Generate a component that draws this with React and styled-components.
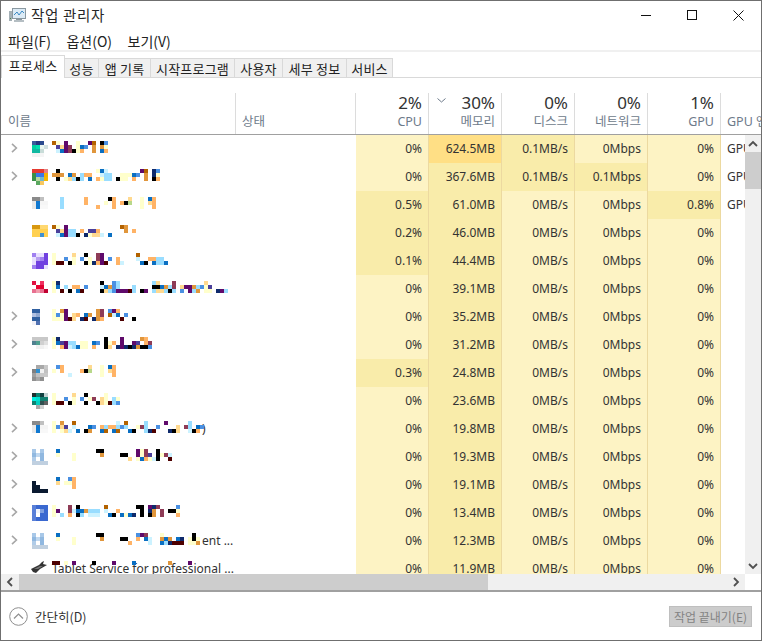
import React from "react";
import styled, { createGlobalStyle } from "styled-components";

const GlobalStyle = createGlobalStyle`
  html, body {
    margin: 0;
    padding: 0;
    background: #fff;
  }
  body {
    font-family: "Noto Sans", "Noto Sans CJK KR", sans-serif;
    font-size: 12px;
    color: #1f1f1f;
  }
`;

const COLUMNS = "235px 120px 73px 73px 73px 73px 73px 73px";
const heatColors = ["#fdf3c4", "#f9ecaa", "#ffdf85"];

const Window = styled.div`
  width: 762px;
  height: 641px;
  box-sizing: border-box;
  border: 1px solid #6f6f6f;
  display: flex;
  flex-direction: column;
  overflow: hidden;
  background: #fff;
`;

const TitleBar = styled.div`
  height: 30px;
  box-sizing: border-box;
  padding: 0 0 2px 8px;
  flex: none;
  display: flex;
  align-items: center;
  gap: 5px;
  font-size: 14.5px;
  color: #262626;
`;

const TitleText = styled.span`
  flex: 1;
  font-family: "Noto Sans CJK KR", sans-serif;
  letter-spacing: 0.7px;
  margin-bottom: 2px;
`;

const WindowButton = styled.div`
  width: 46px;
  height: 28px;
  display: flex;
  align-items: center;
  justify-content: center;
`;

const WindowButtons = styled.div`
  display: flex;
`;

const MenuBar = styled.div`
  height: 21px;
  box-sizing: border-box;
  flex: none;
  display: flex;
  align-items: center;
  gap: 15.5px;
  padding-left: 7px;
  font-family: "Noto Sans CJK KR", sans-serif;
  font-size: 14px;
  color: #222;
  border-bottom: 2px solid #f0f0f0;
`;

const TabStrip = styled.div`
  height: 26px;
  flex: none;
  display: flex;
  align-items: flex-end;
  border-bottom: 1px solid #d9d9d9;
  box-sizing: border-box;
`;

const Tab = styled.div`
  width: ${(p) => p.$width}px;
  height: ${(p) => (p.$active ? 23 : 19)}px;
  box-sizing: border-box;
  display: flex;
  align-items: center;
  justify-content: center;
  font-family: "Noto Sans CJK KR", sans-serif;
  font-size: 13px;
  letter-spacing: 0.2px;
  color: #222;
  background: ${(p) => (p.$active ? "#fff" : "#f0f0f0")};
  border: 1px solid #d9d9d9;
  border-left-width: ${(p) => (p.$active ? 1 : 0)}px;
  border-bottom-width: 0;
  padding-bottom: ${(p) => (p.$active ? 4 : 0)}px;
  margin-bottom: ${(p) => (p.$active ? -1 : 0)}px;
  position: relative;
  white-space: nowrap;
`;

const Header = styled.div`
  height: 57px;
  flex: none;
  padding-top: 15px;
  box-sizing: border-box;
  display: grid;
  grid-template-columns: ${COLUMNS};
  border-bottom: 1px solid #a0a0a0;
  overflow: hidden;
`;

const HeaderCell = styled.div`
  position: relative;
  display: flex;
  flex-direction: column;
  justify-content: flex-end;
  align-items: ${(p) => (p.$left ? "flex-start" : "flex-end")};
  padding: 0 6px 4px ${(p) => p.$pad || 6}px;
  border-right: 1px solid #dcdcdc;
  white-space: nowrap;
  min-width: 0;
`;

const HeaderValue = styled.div`
  font-size: 17px;
  line-height: 19px;
  margin-bottom: 1px;
  color: #333;
`;

const HeaderLabel = styled.div`
  font-family: "Noto Sans", "Noto Sans CJK KR", sans-serif;
  font-size: 12.5px;
  line-height: 17px;
  color: #6d7a8a;
`;

const SortMark = styled.svg`
  position: absolute;
  left: 8px;
  top: 5px;
`;

const Main = styled.div`
  flex: 1;
  min-height: 0;
  display: flex;
`;

const Rows = styled.div`
  flex: 1;
  min-width: 0;
  overflow: hidden;
`;

const Row = styled.div`
  height: 28px;
  display: grid;
  grid-template-columns: ${COLUMNS};
`;

const NameCell = styled.div`
  position: relative;
  white-space: nowrap;
  overflow: hidden;
  line-height: 28px;
  padding-left: ${(p) => p.$indent}px;
  color: #333;
`;

const Chevron = styled.svg`
  position: absolute;
  left: 10px;
  top: 8px;
`;

const Mosaic = styled.svg`
  position: absolute;
  left: 30px;
  top: 6px;
`;

const DataCell = styled.div`
  background: ${(p) => heatColors[p.$heat]};
  border-right: 1px solid #ecd9a0;
  text-align: right;
  padding-right: 6px;
  line-height: 27px;
  color: #333;
  white-space: nowrap;
`;

const EngineCell = styled.div`
  padding-left: 6px;
  line-height: 27px;
  color: #333;
  white-space: nowrap;
  overflow: hidden;
`;

const VScroll = styled.div`
  width: 16px;
  flex: none;
  background: #f0f0f0;
  display: flex;
  flex-direction: column;
  align-items: center;
`;

const ScrollButton = styled.div`
  width: ${(p) => (p.$horizontal ? "18px" : "100%")};
  height: ${(p) => (p.$horizontal ? "100%" : "17px")};
  flex: none;
  display: flex;
  align-items: center;
  justify-content: center;
`;

const VThumb = styled.div`
  width: 100%;
  height: 37px;
  background: #cdcdcd;
`;

const Spacer = styled.div`
  flex: 1;
`;

const HScrollRow = styled.div`
  height: 16px;
  flex: none;
  display: flex;
`;

const HScroll = styled.div`
  flex: 1;
  background: #f0f0f0;
  display: flex;
`;

const HThumb = styled.div`
  width: 469px;
  background: #cdcdcd;
`;

const Corner = styled.div`
  width: 16px;
  flex: none;
  background: #fff;
`;

const Footer = styled.div`
  height: 50px;
  flex: none;
  box-sizing: border-box;
  border-top: 2px solid #a0a0a0;
  display: flex;
  align-items: center;
  padding: 0 9px 0 8px;
  gap: 7px;
`;

const FooterLabel = styled.span`
  flex: 1;
  font-family: "Noto Sans CJK KR", sans-serif;
  font-size: 12.5px;
  color: #333;
`;

const EndButton = styled.div`
  width: 83px;
  height: 21px;
  box-sizing: border-box;
  background: #cccccc;
  border: 1px solid #bfbfbf;
  display: flex;
  align-items: center;
  justify-content: center;
  font-family: "Noto Sans CJK KR", sans-serif;
  font-size: 12px;
  color: #838383;
  white-space: nowrap;
`;

const palette = {
  k: "#000000",
  o: "#ffb366",
  O: "#e0963c",
  b: "#0a6fc2",
  B: "#4a90e2",
  l: "#99ddff",
  t: "#ccf2ff",
  y: "#ffffcc",
  c: "#ffd98f",
  p: "#5f0a6b",
  m: "#8e3b56",
  n: "#0f2a6b",
  i: "#4a3f9a",
  r: "#b36200",
  d: "#4d0000",
  g: "#b8d88a",
};

const T = ["#8a8a8a #8a8a8a #c0c0c0 .", "#e8e8e8 #1078d0 #f5f5f5 #f5f5f5", "#e8e8e8 #1078d0 #f8f8f8 #f8f8f8"];
const W = [
  "#a8c8e8 . #a8c8e8 .",
  "#90b8e0 #c0d8f0 #90b8e0 .",
  "#b0cce8 . #90b8e0 .",
  "#c0d0e0 #c0d0e0 #c0d0e0 #c0d0e0",
];

const processes = [
  {
    chevron: true,
    icon: ["#3a5a9a #25357f #2a4a8f .", "#00d0a0 #00e0b0 #e8f5f0 #d0e0e0", "#10b8a0 #10b8a0 #c8dcd8 .", "#f2f2f2 #f2f2f2 #f5f5f5 ."],
    text: ["0r 1y 3p 6y 9p 10r 12k 13B", "1i 2c 3p 4m 6y 7b 8B 10O 12O 13y", "1t 2b 3p 4m 5k 6y 7o 10O 12b 13o"],
    cpu: "0%", mem: "624.5MB", disk: "0.1MB/s", net: "0Mbps", gpu: "0%", engine: "GPU",
    memHeat: 2, diskHeat: 1,
  },
  {
    chevron: true,
    icon: ["#e53a30 #e53a30 #e53a30 #e88080", "#3a9048 #3a78e8 #3a78e8 #f5b000", "#3a9048 #b8d8a0 #70b8d0 #f5b800", ". #5aa860 #f8c860 ."],
    text: [
      "1k 11y 12b 13t 22p 23r 25n 26B",
      "0O 1O 2O 4b 5O 7l 8o 9o 12t 13l 14l 17y 18y 19y 20b 21B 23O 25n 26y",
      "1k 3y 4c 5l 6k 7l 9b 11o 12y 13l 14l 16k 17y 18y 20o 23O 25k 26o",
    ],
    cpu: "0%", mem: "367.6MB", disk: "0.1MB/s", net: "0.1Mbps", gpu: "0%", engine: "GPU",
    diskHeat: 1, netHeat: 1,
  },
  {
    icon: T,
    text: ["2l 8o 14k 15o 19c 22y 24b 25o", "2l 8o 13y 15o 17o 18k 19g 22y 24c 25o", "2l 11o 15o 22y 25o"],
    cpu: "0.5%", mem: "61.0MB", disk: "0MB/s", net: "0Mbps", gpu: "0.8%", engine: "GPU",
    cpuHeat: 1, gpuHeat: 1,
  },
  {
    icon: ["#d89810 #d89810 #ffd870 #ffd870", "#ffd050 #ffd050 #ffd050 #ffd050", "#ffd050 #ffd050 #4090d0 #ffd050"],
    text: ["0r 1y 3p 17r 18O", "1i 2c 3p 4l 5l 7o 9i 10i 11o 18O 20o", "1t 2b 3p 4l 5l 6k 8n 9y 10c 11c 12t 14b"],
    cpu: "0.2%", mem: "46.0MB", disk: "0MB/s", net: "0Mbps", gpu: "0%",
    cpuHeat: 1,
  },
  {
    icon: ["#a080f0 #e8e0ff #e8e0ff #7040e0", "#e8e0ff #b8a0f0 #a080f0 #7040e0", "#e8e0ff #7040e0 #7040e0 #7040e0", "#a080f0 #7040e0 #7040e0 #e8e0ff"],
    text: [
      "0y 5c 8k 11m 12p 21r",
      "0y 3B 5y 7B 9y 11m 12p 14B 16o 21t 24o 25o 26l 27l",
      "0y 1d 2d 4k 5y 8k 9y 10n 11o 12p 13d 16o 17t 22b 23k 25b 26l 27l 28b",
    ],
    cpu: "0.1%", mem: "44.4MB", disk: "0MB/s", net: "0Mbps", gpu: "0%",
    cpuHeat: 1,
  },
  {
    icon: ["#e01040 . #f03060 .", ". #e80030 #e00030 .", "#e87090 #f0a0b0 #e87090 #c00030"],
    text: [
      "0y 1n 12k 15B 16l 25l 26c 30m 38c",
      "0y 1b 3l 5o 6o 8B 12t 13b 14O 15B 16l 20l 25k 26k 27b 28O 29l 30m 32c 33p 34p 35O 36l 37B 38y 39i",
      "0y 2d 4k 6b 7d 12k 13c 14l 15B 16p 17p 18p 19d 20l 22k 23p 25l 26c 27c 28l 29k 30l 32B 34p 35l 36O 38y 39y 41n 42p 43l",
    ],
    cpu: "0%", mem: "39.1MB", disk: "0MB/s", net: "0Mbps", gpu: "0%",
  },
  {
    chevron: true,
    icon: ["#3060a0 #3060a0 . .", "#b0c0e0 #90a8d0 . .", "#3060a0 #3060a0 . .", "#f0f0f8 #5070b0 . ."],
    text: [
      "0y 2O 3p 11O 12m 14B 15p 16o",
      "0y 1B 2y 3p 5c 6o 8b 9O 11O 12m 14r 15t 16b 18B",
      "0y 1y 2y 3p 4d 5c 7n 8d 10n 11O 12o 17d 20k",
    ],
    cpu: "0%", mem: "35.2MB", disk: "0MB/s", net: "0Mbps", gpu: "0%",
  },
  {
    chevron: true,
    icon: ["#c8c8c8 #c8c8c8 #c8c8c8 #c8c8c8", "#508090 #50a090 #d0d0d0 #e0e0e0", ". #f0f0f0 #f0f0f0 #f8f8f8"],
    text: [
      "0y 1n 13k 17p 22O 23o",
      "0y 1b 2i 3p 4l 5l 7y 8y 10b 11B 13k 14y 15o 17p 20p 21i 23o 24m",
      "0y 2o 3p 4t 5l 6b 7y 8y 10o 13k 14c 16n 17p 18n 19k 20n 21O 22k 23k 24B",
    ],
    cpu: "0%", mem: "31.2MB", disk: "0MB/s", net: "0Mbps", gpu: "0%",
  },
  {
    chevron: true,
    icon: [". #a8a8a8 #a8a8a8 #c8c8c8", "#808080 #3090d0 #f0f0f0 #c0c0c0", "#a0a0a0 #c0c0c0 #c8c8c8 #c8c8c8", "#909090 #a8a8a8 #909090 ."],
    text: ["1B 2o 9c 12y 14b 15o", "0y 2o 7o 8k 9g 12y 14c 15o", "4t 12y 15o"],
    cpu: "0.3%", mem: "24.8MB", disk: "0MB/s", net: "0Mbps", gpu: "0%",
    cpuHeat: 1,
  },
  {
    icon: ["#203030 #108070 #104040 #c0d0d0", "#00f0e0 #00e0d0 #108070 #108070", "#108070 #00d0c0 #305050 #606060", ". #a8a8a8 #d0d0d0 ."],
    text: ["0y 5c 8k 13y", "0y 3B 5y 7B 9y 10m 12c 13y 15l 16y", "0y 1d 2d 4k 5y 8k 11k 12c 13y 14d 15l 16B"],
    cpu: "0%", mem: "23.6MB", disk: "0MB/s", net: "0Mbps", gpu: "0%",
  },
  {
    chevron: true,
    icon: T,
    text: [
      "0y 2O 5r 16t 18r 23l 28p 34l",
      "0y 1B 2c 3i 5t 9b 10B 12o 13l 14o 15o 16l 17B 18l 21y 22m 23l 26B 31c 33m 34l 36b 37B",
      "0y 2y 3c 4t 6b 8k 9O 12b 13r 15b 16r 19b 20k 23l 24n 25d 29n 30k 31c 34t 35k 36o",
    ],
    tail: ")", tailAt: 201,
    cpu: "0%", mem: "19.8MB", disk: "0MB/s", net: "0Mbps", gpu: "0%",
  },
  {
    chevron: true,
    icon: W,
    text: [
      "1b 11k 12k 21p 22y 23m 26k",
      "1y 5y 12O 17k 18k 21p 22y 23m 24i 26k 27y 28m 29t",
      "5y 19c 21y 22b 23o 24y 25t 26k 29d",
    ],
    cpu: "0%", mem: "19.3MB", disk: "0MB/s", net: "0Mbps", gpu: "0%",
  },
  {
    chevron: true,
    icon: [". . . .", "#0a1a30 . . .", "#0a1a30 #0a1a30 . .", "#0a1a30 #0a1a30 #0a1a30 #0a1a30"],
    text: ["1b 4B 5o", "1c 3y 4y 5o", "5o"],
    cpu: "0%", mem: "19.1MB", disk: "0MB/s", net: "0Mbps", gpu: "0%",
  },
  {
    chevron: true,
    icon: ["#5a80d8 #3a68d0 #3a68d0 #3a68d0", "#5a80d8 #f0f4fc #80a0e0 #3a68d0", "#5a80d8 #ffffff #3a68d0 #3a68d0", "#5a80d8 #3a68d0 #3a68d0 #3a68d0"],
    text: [
      "0y 4m 6k 13r 21k 22k 24p 25n 26m 31B",
      "0y 1p 4m 5t 6b 7b 8O 9l 10l 11l 13t 16o 22k 24n 25O 27m 29k 30k 31y",
      "0y 2l 4o 6k 7l 9t 10t 11t 14b 15k 17b 18y 19b 20n 22k 24k 25O 27m 31o",
    ],
    cpu: "0%", mem: "13.4MB", disk: "0MB/s", net: "0Mbps", gpu: "0%",
  },
  {
    chevron: true,
    icon: W,
    text: [
      "1b 11k 12k 21B 22p 23m 27y 35k",
      "1y 5y 12O 17k 18k 21o 23b 24t 27O 28b 29O 31b 32n 34y 35k 36y",
      "5y 19o 24t 27b 28l 29n 30d 31d 32d 34y 35y 36O",
    ],
    tail: "ent ...", tailAt: 201,
    cpu: "0%", mem: "12.3MB", disk: "0MB/s", net: "0Mbps", gpu: "0%",
  },
  {
    pen: true,
    text: ["0d 1d 3y 5p 10k 15p 20b 29O 34p", "", ""],
    tail: "Tablet Service for professional ...", tailAt: 51,
    cpu: "0%", mem: "11.9MB", disk: "0MB/s", net: "0Mbps", gpu: "0%",
  },
];

const tabs = [
  ["프로세스", 64, true],
  ["성능", 34],
  ["앱 기록", 52],
  ["시작프로그램", 84],
  ["사용자", 48],
  ["세부 정보", 64],
  ["서비스", 46],
];

const headers = [
  ["2%", "CPU"],
  ["30%", "메모리", true],
  ["0%", "디스크"],
  ["0%", "네트워크"],
  ["1%", "GPU"],
];

function MosaicCells({ row }) {
  const parts = [];
  row.icon?.forEach((line, y) => {
    line.split(" ").forEach((color, x) => {
      if (color !== ".") {
        parts.push(<rect key={`i${x}-${y}`} x={1 + x * 4} y={y * 4} width="4" height="4" fill={color} />);
      }
    });
  });
  row.text.forEach((line, y) => {
    if (!line) return;
    line.split(" ").forEach((token) => {
      const col = parseInt(token, 10);
      const color = palette[token[token.length - 1]];
      parts.push(<rect key={`t${col}-${y}`} x={21 + col * 4} y={y * 4} width="4" height="4" fill={color} />);
    });
  });
  return (
    <Mosaic width="204" height="16" viewBox="0 0 204 16" shapeRendering="crispEdges">
      {parts}
    </Mosaic>
  );
}

function RowChevron() {
  return (
    <Chevron width="7" height="10" viewBox="0 0 7 10" fill="none" stroke="#a6a6a6" strokeWidth="1.6">
      <path d="M1 0.8 5.4 5 1 9.2" />
    </Chevron>
  );
}

function PenIcon() {
  return (
    <svg width="18" height="14" viewBox="0 0 18 14" style={{ position: "absolute", left: 29, top: 5 }}>
      <path d="M1 9 9 5 12 2 14 1 13 4 17 5 10 9 6 13 3 12Z" fill="#333" />
      <path d="M4 9 10 6 13 6 8 9Z" fill="#777" />
    </svg>
  );
}

function ProcessRow({ row }) {
  return (
    <Row>
      <NameCell $indent={row.tailAt || 0}>
        {row.chevron && <RowChevron />}
        {row.tail}
        {row.pen && <PenIcon />}
        <MosaicCells row={row} />
      </NameCell>
      <div />
      <DataCell $heat={row.cpuHeat || 0}>{row.cpu}</DataCell>
      <DataCell $heat={row.memHeat ?? 1}>{row.mem}</DataCell>
      <DataCell $heat={row.diskHeat || 0}>{row.disk}</DataCell>
      <DataCell $heat={row.netHeat || 0}>{row.net}</DataCell>
      <DataCell $heat={row.gpuHeat || 0}>{row.gpu}</DataCell>
      <EngineCell>{row.engine}</EngineCell>
    </Row>
  );
}

function ArrowGlyph({ d }) {
  return (
    <svg width="10" height="10" viewBox="0 0 10 10" fill="none" stroke="#505050" strokeWidth="1.8">
      <path d={d} />
    </svg>
  );
}

export default function App() {
  return (
    <>
      <GlobalStyle />
      <Window>
        <TitleBar>
          <svg width="17" height="15" viewBox="0 0 17 15">
            <rect x="0" y="3" width="3" height="10" fill="#a4b0b6" />
            <rect x="1" y="10" width="1" height="1" fill="#4b8a4b" />
            <rect x="3.5" y="0.5" width="13" height="10" fill="#dcebf6" stroke="#8a98a0" />
            <path d="M5 7 8 4 10 7 13 3 15 5" fill="none" stroke="#3b8ac4" />
            <rect x="7" y="11" width="6" height="1" fill="#8a98a0" />
            <rect x="5" y="12" width="10" height="2" fill="#b5bec3" />
          </svg>
          <TitleText>작업 관리자</TitleText>
          <WindowButtons>
            <WindowButton>
              <svg width="10" height="10" viewBox="0 0 10 10">
                <path d="M0 5.5H10" stroke="#111" />
              </svg>
            </WindowButton>
            <WindowButton>
              <svg width="10" height="10" viewBox="0 0 10 10">
                <rect x="0.5" y="0.5" width="9" height="9" fill="none" stroke="#111" />
              </svg>
            </WindowButton>
            <WindowButton>
              <svg width="11" height="11" viewBox="0 0 11 11">
                <path d="M0.5 0.5 10.5 10.5M10.5 0.5 0.5 10.5" stroke="#111" />
              </svg>
            </WindowButton>
          </WindowButtons>
        </TitleBar>
        <MenuBar>
          <span>파일(F)</span>
          <span>옵션(O)</span>
          <span>보기(V)</span>
        </MenuBar>
        <TabStrip>
          {tabs.map(([label, width, active]) => (
            <Tab key={label} $width={width} $active={active}>
              {label}
            </Tab>
          ))}
        </TabStrip>
        <Header>
          <HeaderCell $left $pad={7}>
            <HeaderLabel>이름</HeaderLabel>
          </HeaderCell>
          <HeaderCell $left>
            <HeaderLabel>상태</HeaderLabel>
          </HeaderCell>
          {headers.map(([value, label, sorted]) => (
            <HeaderCell key={label}>
              {sorted && (
                <SortMark width="9" height="5" viewBox="0 0 9 5" fill="none" stroke="#6d7a8a">
                  <path d="M0.5 0.5 4.5 4 8.5 0.5" />
                </SortMark>
              )}
              <HeaderValue>{value}</HeaderValue>
              <HeaderLabel>{label}</HeaderLabel>
            </HeaderCell>
          ))}
          <HeaderCell $left>
            <HeaderLabel>GPU 엔진</HeaderLabel>
          </HeaderCell>
        </Header>
        <Main>
          <Rows>
            {processes.map((row) => (
              <ProcessRow key={row.mem} row={row} />
            ))}
          </Rows>
          <VScroll>
            <ScrollButton>
              <ArrowGlyph d="M1 7 5 3 9 7" />
            </ScrollButton>
            <VThumb />
            <Spacer />
            <ScrollButton>
              <ArrowGlyph d="M1 3 5 7 9 3" />
            </ScrollButton>
          </VScroll>
        </Main>
        <HScrollRow>
          <HScroll>
            <ScrollButton $horizontal>
              <ArrowGlyph d="M7 1 3 5 7 9" />
            </ScrollButton>
            <HThumb />
            <Spacer />
            <ScrollButton $horizontal>
              <ArrowGlyph d="M3 1 7 5 3 9" />
            </ScrollButton>
          </HScroll>
          <Corner />
        </HScrollRow>
        <Footer>
          <svg width="19" height="19" viewBox="0 0 19 19" fill="none" stroke="#8f8f8f">
            <circle cx="9.5" cy="9.5" r="8.8" />
            <path d="M5 11.5 9.5 7 14 11.5" strokeWidth="1.2" />
          </svg>
          <FooterLabel>간단히(D)</FooterLabel>
          <EndButton>작업 끝내기(E)</EndButton>
        </Footer>
      </Window>
    </>
  );
}
